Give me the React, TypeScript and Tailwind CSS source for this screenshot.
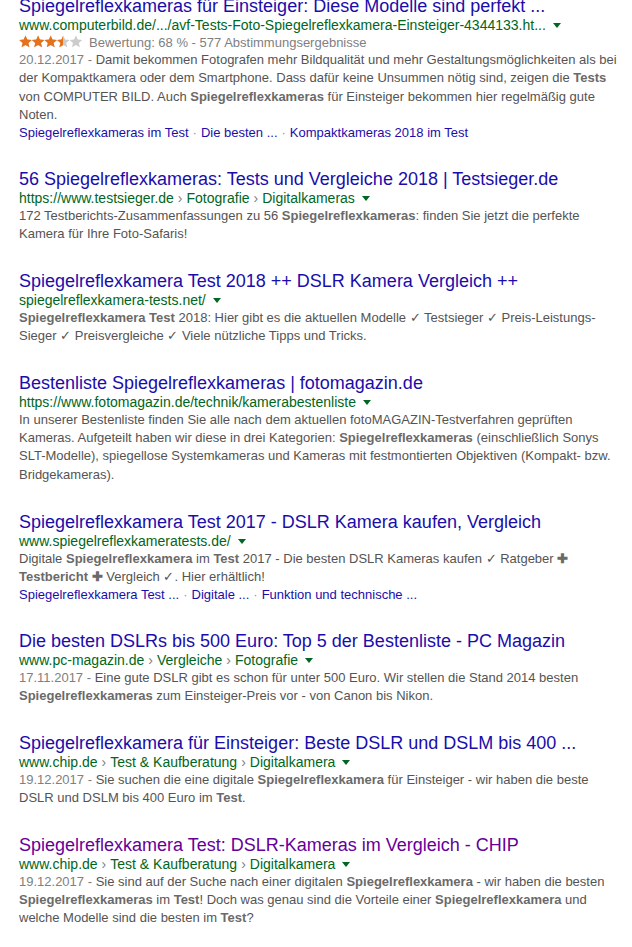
import React from "react";

type Result = {
  title: string;
  visited?: boolean;
  url: React.ReactNode;
  rating?: boolean;
  lines: React.ReactNode[];
  sitelinks?: string[];
};

const B = ({ children }: { children: React.ReactNode }) => (
  <b className="font-bold text-[#6a6a6a]">{children}</b>
);

const D = ({ children }: { children: React.ReactNode }) => (
  <span className="text-[#808080]">{children} - </span>
);

const Sep = () => <span className="mx-[4px] text-[#808080]">›</span>;

const results: Result[] = [
  {
    title: "Spiegelreflexkameras für Einsteiger: Diese Modelle sind perfekt ...",
    url: "www.computerbild.de/.../avf-Tests-Foto-Spiegelreflexkamera-Einsteiger-4344133.ht...",
    rating: true,
    lines: [
      <>
        <D>20.12.2017</D>Damit bekommen Fotografen mehr Bildqualität und mehr Gestaltungsmöglichkeiten als bei
      </>,
      <>
        der Kompaktkamera oder dem Smartphone. Dass dafür keine Unsummen nötig sind, zeigen die <B>Tests</B>
      </>,
      <>
        von COMPUTER BILD. Auch <B>Spiegelreflexkameras</B> für Einsteiger bekommen hier regelmäßig gute
      </>,
      <>Noten.</>,
    ],
    sitelinks: ["Spiegelreflexkameras im Test", "Die besten ...", "Kompaktkameras 2018 im Test"],
  },
  {
    title: "56 Spiegelreflexkameras: Tests und Vergleiche 2018 | Testsieger.de",
    url: (
      <>
        https://www.testsieger.de<Sep />Fotografie<Sep />Digitalkameras
      </>
    ),
    lines: [
      <>
        172 Testberichts-Zusammenfassungen zu 56 <B>Spiegelreflexkameras</B>: finden Sie jetzt die perfekte
      </>,
      <>Kamera für Ihre Foto-Safaris!</>,
    ],
  },
  {
    title: "Spiegelreflexkamera Test 2018 ++ DSLR Kamera Vergleich ++",
    url: "spiegelreflexkamera-tests.net/",
    lines: [
      <>
        <B>Spiegelreflexkamera Test</B> 2018: Hier gibt es die aktuellen Modelle ✓ Testsieger ✓ Preis-Leistungs-
      </>,
      <>Sieger ✓ Preisvergleiche ✓ Viele nützliche Tipps und Tricks.</>,
    ],
  },
  {
    title: "Bestenliste Spiegelreflexkameras | fotomagazin.de",
    url: "https://www.fotomagazin.de/technik/kamerabestenliste",
    lines: [
      <>In unserer Bestenliste finden Sie alle nach dem aktuellen fotoMAGAZIN-Testverfahren geprüften</>,
      <>
        Kameras. Aufgeteilt haben wir diese in drei Kategorien: <B>Spiegelreflexkameras</B> (einschließlich Sonys
      </>,
      <>SLT-Modelle), spiegellose Systemkameras und Kameras mit festmontierten Objektiven (Kompakt- bzw.</>,
      <>Bridgekameras).</>,
    ],
  },
  {
    title: "Spiegelreflexkamera Test 2017 - DSLR Kamera kaufen, Vergleich",
    url: "www.spiegelreflexkameratests.de/",
    lines: [
      <>
        Digitale <B>Spiegelreflexkamera</B> im <B>Test</B> 2017 - Die besten DSLR Kameras kaufen ✓ Ratgeber{" "}
        <B>✚</B>
      </>,
      <>
        <B>Testbericht</B> <B>✚</B> Vergleich ✓. Hier erhältlich!
      </>,
    ],
    sitelinks: ["Spiegelreflexkamera Test ...", "Digitale ...", "Funktion und technische ..."],
  },
  {
    title: "Die besten DSLRs bis 500 Euro: Top 5 der Bestenliste - PC Magazin",
    url: (
      <>
        www.pc-magazin.de<Sep />Vergleiche<Sep />Fotografie
      </>
    ),
    lines: [
      <>
        <D>17.11.2017</D>Eine gute DSLR gibt es schon für unter 500 Euro. Wir stellen die Stand 2014 besten
      </>,
      <>
        <B>Spiegelreflexkameras</B> zum Einsteiger-Preis vor - von Canon bis Nikon.
      </>,
    ],
  },
  {
    title: "Spiegelreflexkamera für Einsteiger: Beste DSLR und DSLM bis 400 ...",
    url: (
      <>
        www.chip.de<Sep />Test &amp; Kaufberatung<Sep />Digitalkamera
      </>
    ),
    lines: [
      <>
        <D>19.12.2017</D>Sie suchen die eine digitale <B>Spiegelreflexkamera</B> für Einsteiger - wir haben die beste
      </>,
      <>
        DSLR und DSLM bis 400 Euro im <B>Test</B>.
      </>,
    ],
  },
  {
    title: "Spiegelreflexkamera Test: DSLR-Kameras im Vergleich - CHIP",
    visited: true,
    url: (
      <>
        www.chip.de<Sep />Test &amp; Kaufberatung<Sep />Digitalkamera
      </>
    ),
    lines: [
      <>
        <D>19.12.2017</D>Sie sind auf der Suche nach einer digitalen <B>Spiegelreflexkamera</B> - wir haben die besten
      </>,
      <>
        <B>Spiegelreflexkameras</B> im <B>Test</B>! Doch was genau sind die Vorteile einer{" "}
        <B>Spiegelreflexkamera</B> und
      </>,
      <>
        welche Modelle sind die besten im <B>Test</B>?
      </>,
    ],
  },
];

function Stars() {
  const star = "M6.5 0.4l1.8 4.2 4.5 0.35-3.4 2.95 1.05 4.45-3.95-2.4-3.95 2.4 1.05-4.45-3.4-2.95 4.5-0.35z";
  const row = (fill: string) => (
    <svg width="65" height="13" viewBox="0 0 65 13">
      {[0, 1, 2, 3, 4].map((i) => (
        <path key={i} d={star} transform={`translate(${i * 12.6} 0)`} fill={fill} />
      ))}
    </svg>
  );
  return (
    <span className="relative mr-[5px] inline-block h-[13px] w-[65px] align-[-1px]">
      <span className="absolute left-0 top-0">{row("#cccccc")}</span>
      <span className="absolute left-0 top-0 w-[44px] overflow-hidden">{row("#e7711b")}</span>
    </span>
  );
}

function Item({ r, first }: { r: Result; first: boolean }) {
  return (
    <div className={first ? "-mt-[5px] mb-[26.5px]" : "mb-[26.5px]"}>
      <h3
        className={`whitespace-nowrap text-[18px] leading-[22px] font-normal ${
          r.visited ? "text-[#660099]" : "text-[#1a0dab]"
        }`}
      >
        {r.title}
      </h3>
      <div className="whitespace-nowrap text-[14px] leading-[17px] text-[#006621]">
        {r.url}
        <span className="ml-[7px] inline-block h-0 w-0 border-x-[4px] border-t-[5px] border-x-transparent border-t-[#006621] align-[2px]" />
      </div>
      {r.rating && (
        <div className="whitespace-nowrap text-[13px] leading-[17px] text-[#808080]">
          <Stars />
          Bewertung: 68 % - 577 Abstimmungsergebnisse
        </div>
      )}
      <div className="text-[13px] leading-[18.3px] text-[#545454]">
        {r.lines.map((l, i) => (
          <div key={i} className="whitespace-nowrap">
            {l}
          </div>
        ))}
      </div>
      {r.sitelinks && (
        <div className="whitespace-nowrap text-[13px] leading-[17px] text-[#1a0dab]">
          {r.sitelinks.map((s, i) => (
            <React.Fragment key={s}>
              {i > 0 && <span className="mx-[4px] text-[#999999]">·</span>}
              <span>{s}</span>
            </React.Fragment>
          ))}
        </div>
      )}
    </div>
  );
}

export default function App() {
  return (
    <div className="h-[947px] w-[632px] overflow-hidden bg-white pl-[19px] font-['Liberation_Sans',Arial,sans-serif]">
      <div className="w-[600px]">
        {results.map((r, i) => (
          <Item key={i} r={r} first={i === 0} />
        ))}
      </div>
    </div>
  );
}
